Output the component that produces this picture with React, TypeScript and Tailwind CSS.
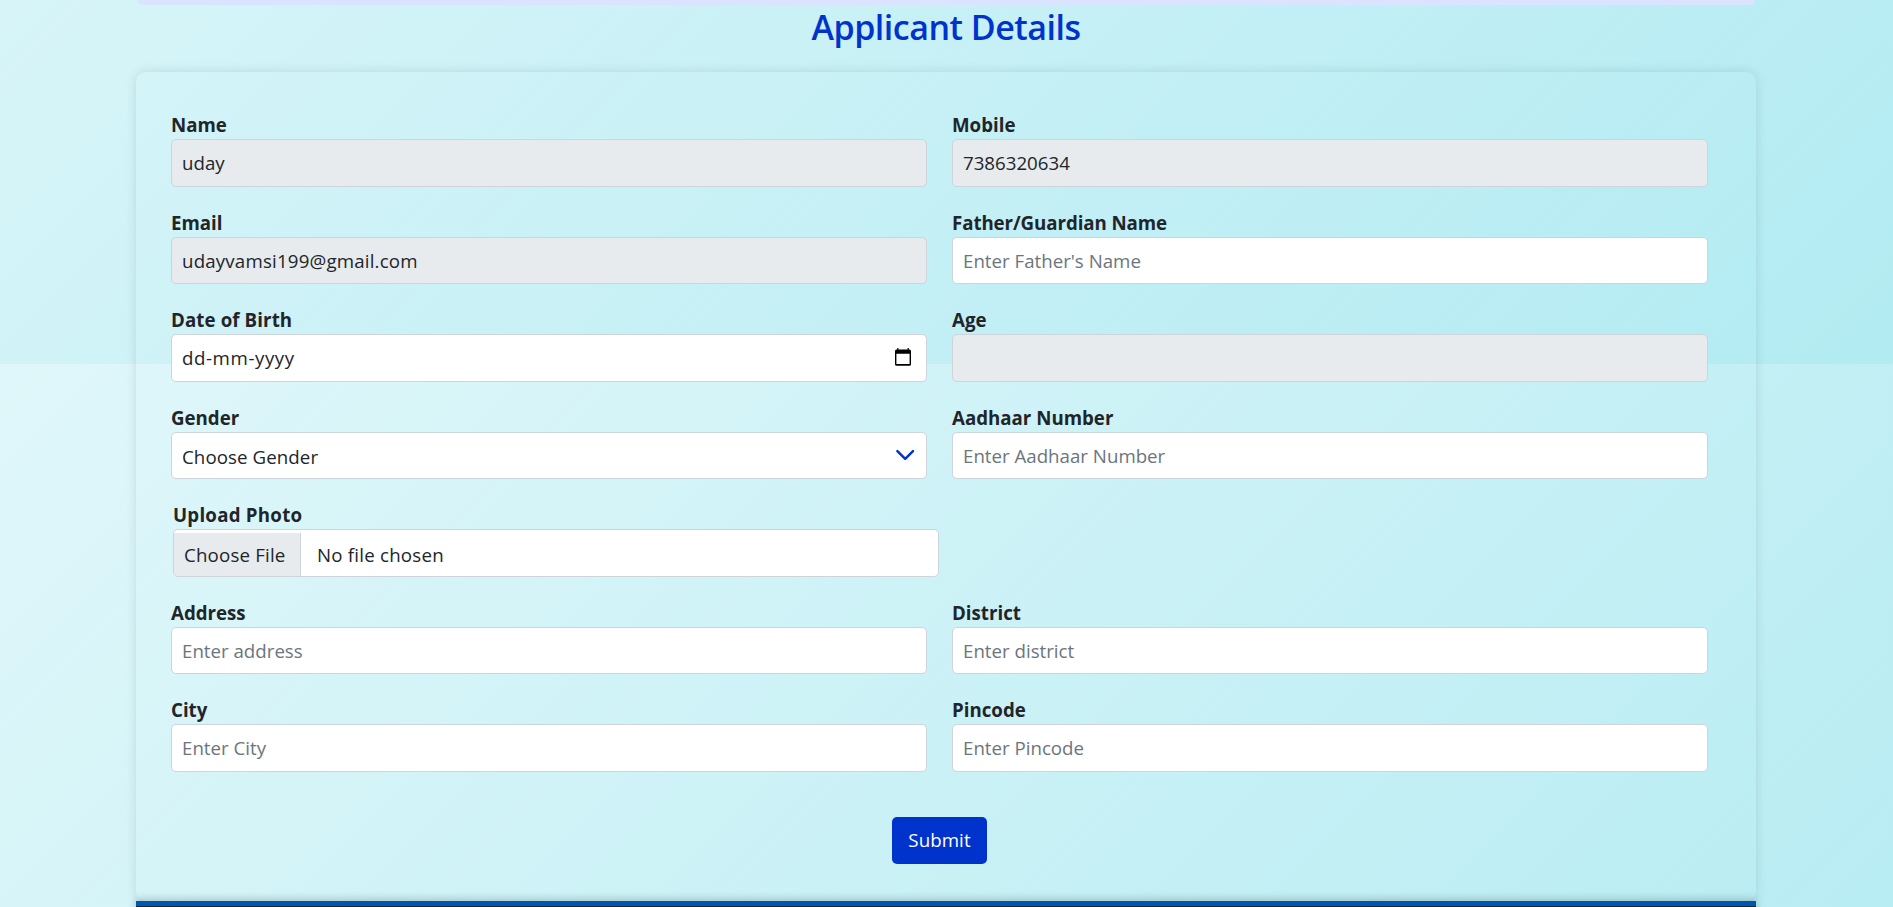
import React from "react";

const controlClass =
  "block h-[47.5px] w-full rounded-[5px] border border-[#ced4da] bg-white pl-[10px] pr-[10px] text-[18.7px] leading-[30px] text-[#212529] placeholder:text-[#6c757d] placeholder:opacity-100 outline-none";
const disabledClass =
  "block h-[47.5px] w-full rounded-[5px] border border-[#ced4da] bg-[#e7ebee] pl-[10px] pr-[10px] text-[18.7px] leading-[30px] text-[#212529] outline-none";

function Label({ children, tracking = "" }: { children: React.ReactNode; tracking?: string }) {
  return (
    <span
      className={`block h-[30px] whitespace-nowrap pt-px text-[18.7px] font-bold leading-[30px] text-[#212529] ${tracking}`}
    >
      {children}
    </span>
  );
}

type FieldProps = {
  label: string;
  value?: string;
  placeholder?: string;
  locked?: boolean;
  tracking?: string;
  labelTracking?: string;
};

function Field({ label, value, placeholder, locked, tracking = "", labelTracking }: FieldProps) {
  return (
    <label className="block">
      <Label tracking={labelTracking}>{label}</Label>
      <input
        type="text"
        className={`${locked ? disabledClass : controlClass} ${tracking}`}
        defaultValue={value}
        placeholder={placeholder}
        readOnly={locked}
      />
    </label>
  );
}

function CalendarIcon() {
  return (
    <svg className="mb-[2px] mr-[5px] h-[18px] w-[16px]" viewBox="0 0 16 18" aria-hidden="true">
      <path
        fill="#000"
        fillRule="evenodd"
        d="M2.2 0h1.2v1.4h9.2V0h1.2v1.4h.7A1.5 1.5 0 0 1 16 2.9v13.3a1.5 1.5 0 0 1-1.5 1.5h-13A1.5 1.5 0 0 1 0 16.2V2.9a1.5 1.5 0 0 1 1.5-1.5h.7V0ZM1.4 5.8v10.3h13.2V5.8H1.4Z"
      />
    </svg>
  );
}

function ChevronIcon() {
  return (
    <svg className="mb-[1px] mr-px h-[12px] w-[20px]" viewBox="0 0 20 12" fill="none" aria-hidden="true">
      <path d="M2.4 2.2l7.8 7.6 7.8-7.6" stroke="#0033cc" strokeWidth="2.5" strokeLinecap="round" strokeLinejoin="round" />
    </svg>
  );
}

export default function App() {
  return (
    <div className="h-[907px] overflow-hidden bg-[linear-gradient(135deg,#e0f7fa,#b2ebf2)] bg-[length:100%_907px] bg-[position:0_364px] bg-repeat pl-[136px] font-['Open_Sans','Noto_Sans',sans-serif]">
      <div className="w-[1620px]">
        <div className="mx-px h-[5px] rounded-b-[10px] bg-[#dae4ff]" />
        <h2 className="flex h-[67px] items-start justify-center pt-[1px] text-[34px] font-semibold leading-[42px] tracking-[-0.5px] text-[#0033cc]">
          Applicant Details
        </h2>
        <form className="h-[829px] rounded-[10px] pl-[35px] pt-[37px] shadow-[0_0_12px_rgba(0,0,0,0.11)]">
          <div className="grid w-[1537px] grid-cols-2 gap-x-[25px] gap-y-[20px]">
            <Field label="Name" value="uday" locked />
            <Field label="Mobile" value="7386320634" locked />
            <Field label="Email" value="udayvamsi199@gmail.com" tracking="tracking-[0.18px]" locked />
            <Field
              label="Father/Guardian Name"
              placeholder="Enter Father's Name"
              labelTracking="tracking-[-0.08px]"
            />
            <div>
              <Label tracking="tracking-[0.1px]">Date of Birth</Label>
              <div className="flex h-[47.5px] items-center justify-between rounded-[5px] border border-[#ced4da] bg-white px-[10px] text-[18.7px] leading-[30px] text-[#212529]">
                <span className="tracking-[0.58px]">dd-mm-yyyy</span>
                <CalendarIcon />
              </div>
            </div>
            <Field label="Age" locked />
            <div>
              <Label>Gender</Label>
              <div className="flex h-[47.5px] items-center justify-between rounded-[5px] border border-[#ced4da] bg-white px-[10px] text-[18.7px] leading-[30px] text-[#212529]">
                <span className="pt-[4px] tracking-[0.08px]">Choose Gender</span>
                <ChevronIcon />
              </div>
            </div>
            <Field label="Aadhaar Number" placeholder="Enter Aadhaar Number" />
            <div className="col-span-2 ml-[2px] w-[766px]">
              <Label tracking="tracking-[0.24px]">Upload Photo</Label>
              <div className="flex h-[47.5px] overflow-hidden rounded-[5px] border border-[#ced4da] bg-white pt-[3px] text-[18.7px] leading-[44px] text-[#212529]">
                <span className="w-[127px] whitespace-nowrap border-r border-[#ced4da] bg-[#e7ebee] pl-[10px] tracking-[0.18px]">
                  Choose File
                </span>
                <span className="pl-[16px] tracking-[0.22px]">No file chosen</span>
              </div>
            </div>
            <Field label="Address" placeholder="Enter address" />
            <Field label="District" placeholder="Enter district" />
            <Field label="City" placeholder="Enter City" />
            <Field label="Pincode" placeholder="Enter Pincode" />
          </div>
          <div className="flex w-[1537px] justify-center pt-[45px]">
            <button
              type="button"
              className="h-[47px] w-[95px] rounded-[5px] bg-[#0033cc] text-[18.7px] leading-[46px] tracking-[0.1px] text-white"
            >
              Submit
            </button>
          </div>
        </form>
        <div className="h-[40px] border-t-[5px] border-[#0056b3] bg-[#212529] shadow-[0_-2px_8px_rgba(0,0,0,0.2)]" />
      </div>
    </div>
  );
}
